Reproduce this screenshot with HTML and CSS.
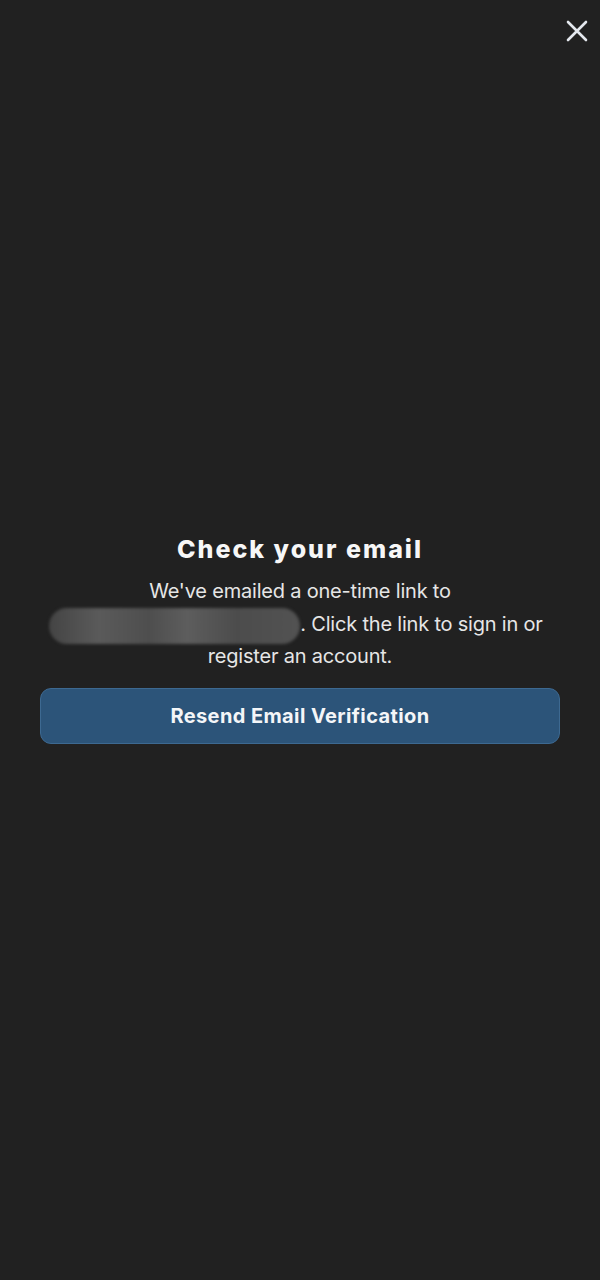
FILE: index.html
```html
<!DOCTYPE html>
<html lang="en">
<head>
<meta charset="utf-8">
<title>Check your email</title>
<link rel="stylesheet" href="styles.css">
</head>
<body>
<div class="screen">
  <button class="close" aria-label="Close">
    <svg viewBox="0 0 24 24" width="24" height="24"><path d="M3 3 L21 21 M21 3 L3 21" stroke="currentColor" stroke-width="2.6" stroke-linecap="round" fill="none"/></svg>
  </button>
  <main class="panel">
    <h1 class="title">Check your email</h1>
    <p class="message">We've emailed a one-time link to <span class="redacted"><span class="redacted-fill"></span></span>. Click the link to sign in or register an account.</p>
    <button class="resend">Resend Email Verification</button>
  </main>
</div>
</body>
</html>
```
FILE: styles.css
```css
html, body {
  margin: 0;
  padding: 0;
  background: #212121;
}

body {
  font-family: Inter, "Noto Sans", sans-serif;
  color: #e9e9ea;
}

.screen {
  position: relative;
  height: 1280px;
  display: flex;
  flex-direction: column;
  justify-content: center;
  align-items: center;
}

.close {
  position: absolute;
  top: 19px;
  right: 11px;
  width: 24px;
  height: 24px;
  padding: 0;
  border: 0;
  background: none;
  color: #e4e8ee;
  cursor: pointer;
}

.close svg {
  display: block;
}

.panel {
  width: 520px;
  display: flex;
  flex-direction: column;
  align-items: center;
  text-align: center;
  margin-top: -3px;
}

.title {
  margin: 0 0 10px;
  font-size: 25px;
  line-height: 32px;
  font-weight: 800;
  letter-spacing: 2px;
  color: #f7f7f7;
}

.message {
  margin: 0 0 15px;
  font-size: 20px;
  line-height: 32.5px;
  color: #e6e6e6;
  letter-spacing: -0.2px;
}

/* blurred-out address placeholder */
.redacted {
  display: inline-block;
  width: 251px;
  height: 36px;
  vertical-align: middle;
  margin-top: -6px;
  margin-left: -8px;
  position: relative;
  top: 4px;
}

.redacted-fill {
  display: block;
  height: 100%;
  border-radius: 18px;
  background: linear-gradient(90deg, #444 0%, #5a5a5a 20%, #4e4e4e 40%, #5d5d5d 55%, #4c4c4c 75%, #525252 100%);
  filter: blur(1.5px);
}

.resend {
  width: 520px;
  height: 56px;
  border: 1px solid #3d6991;
  border-radius: 11px;
  background: #2c5479;
  color: #f4f6f8;
  font-family: Inter, "Noto Sans", sans-serif;
  font-size: 20px;
  font-weight: 700;
  letter-spacing: 0.4px;
  cursor: pointer;
}
```
